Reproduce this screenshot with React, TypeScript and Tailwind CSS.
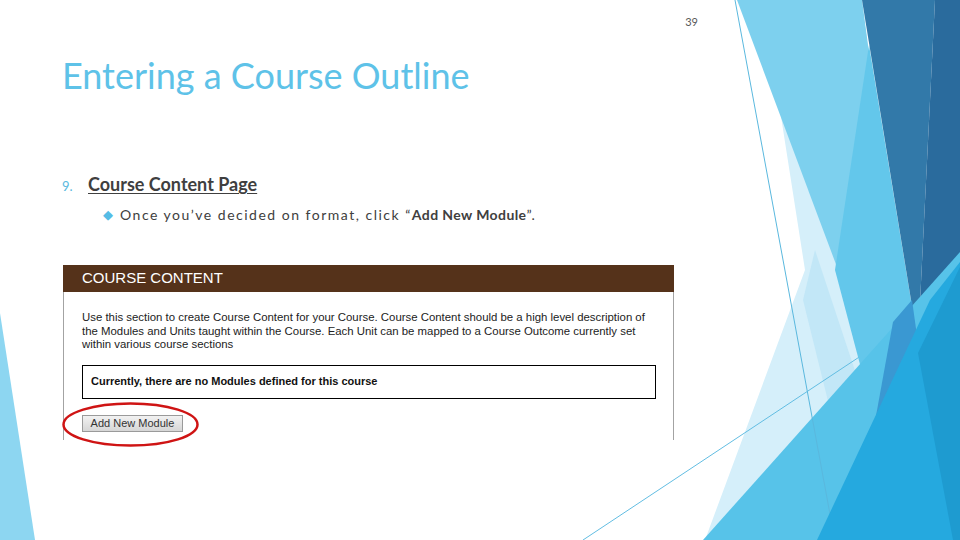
import React from "react";

const font = { fontFamily: "Lato, 'Open Sans', sans-serif" };
const arial = { fontFamily: "'Liberation Sans', Arial, sans-serif" };

function Facets() {
  return (
    <svg className="absolute inset-0" width="960" height="540" viewBox="0 0 960 540">
      {/* left corner sliver */}
      <polygon points="0,313 35,540 0,540" fill="#8dd6f1" />
      {/* right side facets */}
      <polygon points="780,110 805,270 705,540 885,540 885,300" fill="#d5effa" />
      <polygon points="815,250 878,440 845,470 803,300" fill="#c2e7f7" />
      <polygon points="737,0 862,0 870,60 840,275" fill="#7dd0ee" />
      <line x1="583" y1="540" x2="900" y2="330" stroke="#62bde2" strokeWidth="1" />
      <polygon points="869,45 918,343 880,440 835,270" fill="#63c7eb" />
      <polygon points="862,0 935,0 918,343" fill="#3279a9" />
      <polygon points="935,0 960,0 960,267 918,343" fill="#2a6b9d" />
      <polygon points="703,540 960,252 960,540" fill="#57c3e9" />
      <polygon points="872,438 893,322 912,300 918,343 905,380" fill="#3a98d2" />
      <line x1="735" y1="0" x2="832" y2="525" stroke="#5ab8de" strokeWidth="1" />
      <polygon points="817,540 930,300 960,262 960,540" fill="#25a9df" />
      <polygon points="918,353 960,267 960,540 953,540" fill="#1e9bd0" />
    </svg>
  );
}

function CourseContentShot() {
  return (
    <div className="relative ml-[1px] w-[611px]" style={arial}>
      <div className="flex h-[27px] items-center bg-[#55321a] px-[19px] text-[15px] text-white">
        COURSE CONTENT
      </div>
      <div className="h-[148px] overflow-hidden border-x border-[#a3a3a3] bg-white px-[18px] pt-[19px]">
        <p className="text-[11.4px] leading-[13.5px] text-[#222]">
          Use this section to create Course Content for your Course. Course Content should be a high level description of
          the Modules and Units taught within the Course. Each Unit can be mapped to a Course Outcome currently set
          within various course sections
        </p>
        <div className="mt-[13px] flex h-[34px] w-[574px] items-center border border-black px-[8px] text-[11px] font-bold text-[#111]">
          Currently, there are no Modules defined for this course
        </div>
        <div className="mt-[16px] flex h-[17px] w-[101px] items-center justify-center border border-[#9a9a9a] bg-gradient-to-b from-[#f2f2f2] to-[#d6d6d6] text-[11px] text-[#333]">
          Add New Module
        </div>
      </div>
      <svg className="absolute left-[-1px] top-[137px] overflow-visible" width="137" height="45" viewBox="0 0 137 45">
        <ellipse cx="68.5" cy="22.5" rx="67" ry="21" fill="none" stroke="#cf1414" strokeWidth="2.5" />
      </svg>
    </div>
  );
}

export default function App() {
  return (
    <div className="relative h-[540px] w-[960px] overflow-hidden bg-white">
      <Facets />
      <div className="relative flex flex-col pl-[62px] pt-[15px]" style={font}>
        <div className="w-[636px] text-right text-[11px] leading-[14px] text-[#595959]">39</div>
        <h1 className="mt-[26px] text-[36px] leading-[40px] text-[#5ec2e8]">Entering a Course Outline</h1>
        <div className="mt-[76px] flex items-baseline">
          <span className="w-[26px] text-[13px] text-[#5ab9de]">9.</span>
          <span className="text-[18px] font-bold text-[#3f3f3f] underline decoration-1 underline-offset-2">
            Course Content Page
          </span>
        </div>
        <div className="mt-[6px] ml-[41px] flex items-center gap-[7px] text-[14px] text-[#404040]">
          <span className="text-[13px] text-[#55bce5]">◆</span>
          <span className="tracking-[1.5px]">
            Once you’ve decided on format, click “<b className="tracking-[0.4px]">Add New Module</b>”.
          </span>
        </div>
        <div className="mt-[40px]">
          <CourseContentShot />
        </div>
      </div>
    </div>
  );
}
